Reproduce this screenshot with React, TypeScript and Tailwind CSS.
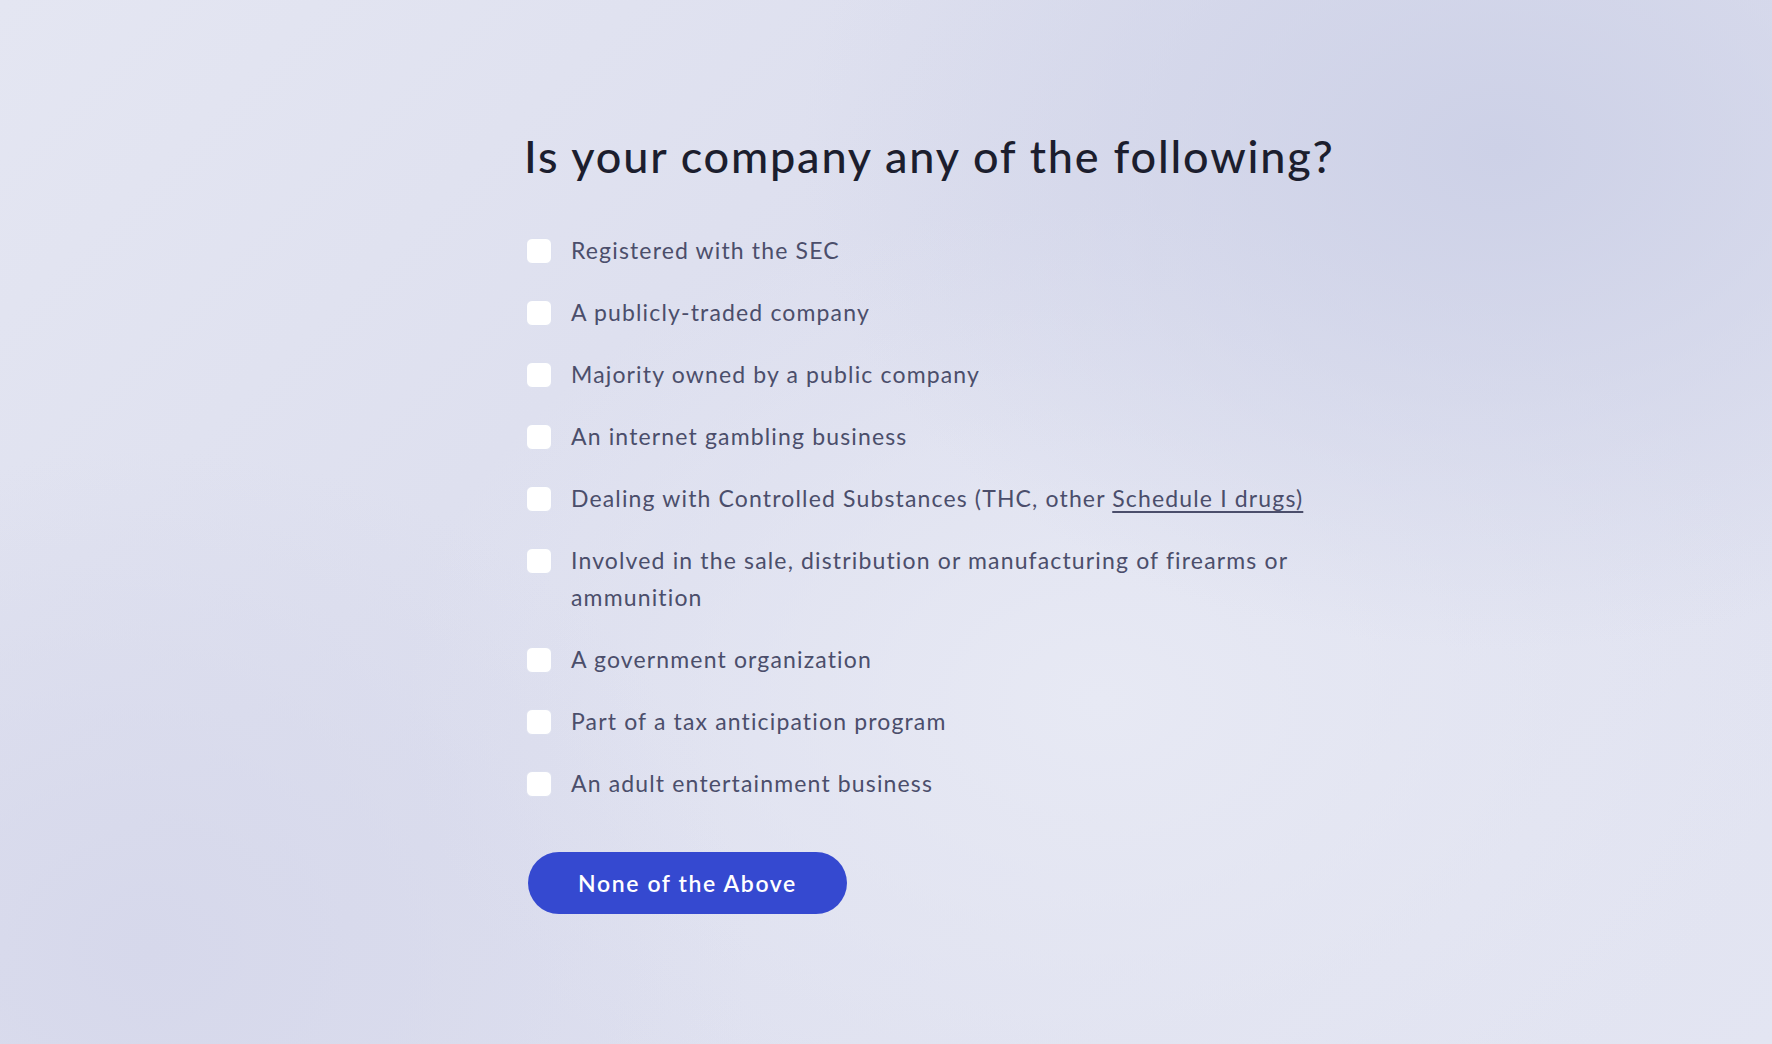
const items: { label: string; link?: string }[] = [
  { label: "Registered with the SEC" },
  { label: "A publicly-traded company" },
  { label: "Majority owned by a public company" },
  { label: "An internet gambling business" },
  { label: "Dealing with Controlled Substances (THC, other ", link: "Schedule I drugs)" },
  { label: "Involved in the sale, distribution or manufacturing of firearms or ammunition" },
  { label: "A government organization" },
  { label: "Part of a tax anticipation program" },
  { label: "An adult entertainment business" },
];

export default function App() {
  return (
    <div className="min-h-[1044px] w-full bg-[radial-gradient(ellipse_700px_500px_at_1500px_150px,#cdd1e7_0%,rgba(205,209,231,0)_100%),radial-gradient(ellipse_600px_500px_at_150px_950px,#d6d8eb_0%,rgba(214,216,235,0)_100%),radial-gradient(ellipse_700px_500px_at_1100px_700px,#e7e9f4_0%,rgba(231,233,244,0)_100%),linear-gradient(135deg,#e4e6f2_0%,#dcdeee_45%,#e3e5f2_100%)] font-['Lato','Open_Sans',sans-serif]">
      <div className="pl-[524px] pt-[128px]">
        <h1 className="text-[45px] leading-[56px] font-medium text-[#1c1e2e] tracking-[0.04em]">
          Is your company any of the following?
        </h1>

        <ul className="mt-[48px] flex flex-col gap-[25px]">
          {items.map((item) => (
            <li key={item.label} className="flex items-start gap-[19px] pl-[2px]">
              <span className="mt-[6px] h-[26px] w-[26px] shrink-0 rounded-[6px] border border-[#dde0ef] bg-white" />
              <span className="w-[760px] text-[23px] leading-[37px] text-[#4b4e6b] tracking-[0.05em]">
                {item.label}
                {item.link && (
                  <a href="#" className="underline underline-offset-[4px] decoration-[1.5px]">
                    {item.link}
                  </a>
                )}
              </span>
            </li>
          ))}
        </ul>

        <button className="mt-[50px] ml-[4px] h-[62px] w-[319px] rounded-full bg-[#3549d0] text-[23px] font-semibold tracking-[0.07em] text-white">
          None of the Above
        </button>
      </div>
    </div>
  );
}
